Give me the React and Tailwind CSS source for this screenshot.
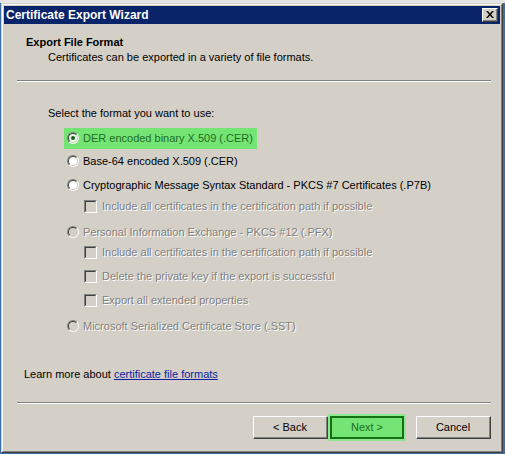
import React from "react";

const font = { fontFamily: '"Liberation Sans", Arial, sans-serif' };

function Radio({ checked, disabled, tint }) {
  return (
    <span className="w-[12px] h-[12px] rounded-full border border-t-[#808080] border-l-[#808080] border-b-white border-r-white flex shrink-0">
      <span
        className={`flex-1 rounded-full border border-t-[#404040] border-l-[#404040] border-b-[#d4d0c8] border-r-[#d4d0c8] flex items-center justify-center ${
          disabled ? "bg-[#d4d0c8]" : tint ? "bg-[#e6fbe6]" : "bg-white"
        }`}
      >
        {checked && <span className="w-[4px] h-[4px] rounded-full bg-[#1d5a1d]" />}
      </span>
    </span>
  );
}

function Check() {
  return (
    <span className="w-[13px] h-[13px] border border-t-[#808080] border-l-[#808080] border-b-white border-r-white flex shrink-0">
      <span className="flex-1 border border-t-[#404040] border-l-[#404040] border-b-[#d4d0c8] border-r-[#d4d0c8] bg-[#d4d0c8]" />
    </span>
  );
}

const dim = "text-[#808080] [text-shadow:1px_1px_0_#ffffff]";

function Option({ label, checked, disabled, highlight, mt }) {
  return (
    <div className={`h-[20px] flex items-center ${mt}`}>
      <div
        className={`flex items-center h-[21px] pl-[3px] pr-[4px] gap-[4px] ${
          highlight ? "bg-[#74e474] text-[#1f6e1f]" : disabled ? dim : "text-black"
        }`}
      >
        <Radio checked={checked} disabled={disabled} tint={highlight} />
        <span>{label}</span>
      </div>
    </div>
  );
}

function CheckRow({ label, mt }) {
  return (
    <div className={`h-[20px] flex items-center pl-[20px] gap-[5px] ${mt}`}>
      <Check />
      <span className={dim}>{label}</span>
    </div>
  );
}

function Button({ children, primary }) {
  if (primary) {
    return (
      <div className="p-[2px] bg-[#8fe88f]">
        <div className="w-[74px] h-[23px] border-2 border-[#157015] bg-[#74e474] flex items-center justify-center text-[#1f6e1f]">
          {children}
        </div>
      </div>
    );
  }
  return (
    <div className="w-[75px] h-[23px] border border-t-white border-l-white border-b-[#404040] border-r-[#404040] flex">
      <div className="flex-1 border-b border-r border-[#808080] bg-[#d4d0c8] flex items-center justify-center text-black">
        {children}
      </div>
    </div>
  );
}

function Separator() {
  return (
    <div className="ml-[13px] mr-[9px] h-[2px] flex flex-col shrink-0">
      <div className="h-px bg-[#808080]" />
      <div className="h-px bg-white" />
    </div>
  );
}

export default function App() {
  return (
    <div className="w-[505px] h-[454px] bg-[#3a6ea5] flex flex-col text-[11px] leading-none" style={font}>
      <div className="h-[3px] bg-[#e4e4e4] shrink-0" />
      <div className="flex-1 ml-[1px] mr-[2px] mb-[1px] bg-[#d4d0c8] border border-t-[#d4d0c8] border-l-[#d4d0c8] border-b-[#404040] border-r-[#404040] flex flex-col">
        <div className="flex-1 border border-t-white border-l-white border-b-[#808080] border-r-[#808080] p-px flex flex-col">
          <div className="h-[18px] bg-[#0a246a] flex items-center justify-between pl-[2px] pr-[2px] shrink-0">
            <span className="text-white font-bold text-[12px]">Certificate Export Wizard</span>
            <div className="w-[16px] h-[14px] border border-t-white border-l-white border-b-[#404040] border-r-[#404040] flex">
              <div className="flex-1 border-b border-r border-[#808080] bg-[#d4d0c8] flex items-center justify-center">
                <svg width="8" height="7" viewBox="0 0 8 7">
                  <path d="M0 0h2l2 2.5L6 0h2L5 3.5 8 7H6L4 4.5 2 7H0l3-3.5z" fill="#000" />
                </svg>
              </div>
            </div>
          </div>

          <div className="flex flex-col pt-[10px] pl-[22px]">
            <div className="font-bold h-[16px] flex items-center">Export File Format</div>
            <div className="pl-[22px] h-[14px] flex items-center">
              Certificates can be exported in a variety of file formats.
            </div>
          </div>
          <div className="h-[16px]" />
          <Separator />

          <div className="flex flex-col pl-[44px] pt-[23px]">
            <div className="h-[16px] flex items-center">Select the format you want to use:</div>
            <div className="pl-[16px] pt-[7px] flex flex-col">
              <Option label="DER encoded binary X.509 (.CER)" checked highlight />
              <Option label="Base-64 encoded X.509 (.CER)" mt="mt-[3px]" />
              <Option label="Cryptographic Message Syntax Standard - PKCS #7 Certificates (.P7B)" mt="mt-[4px]" />
              <CheckRow label="Include all certificates in the certification path if possible" mt="mt-[1px]" />
              <Option label="Personal Information Exchange - PKCS #12 (.PFX)" disabled mt="mt-[6px]" />
              <CheckRow label="Include all certificates in the certification path if possible" />
              <CheckRow label="Delete the private key if the export is successful" mt="mt-[4px]" />
              <CheckRow label="Export all extended properties" mt="mt-[4px]" />
              <Option label="Microsoft Serialized Certificate Store (.SST)" disabled mt="mt-[6px]" />
            </div>
          </div>

          <div className="pl-[20px] pt-[33px] h-[66px] flex items-start shrink-0">
            <span>
              Learn more about{" "}
              <span className="text-[#0a1ea0] underline">certificate file formats</span>
            </span>
          </div>
          <Separator />

          <div className="flex justify-end pr-[9px] pt-[10px]">
            <div className="flex items-center">
              <Button>&lt; Back</Button>
              <Button primary>Next &gt;</Button>
              <div className="w-[10px]" />
              <Button>Cancel</Button>
            </div>
          </div>
        </div>
      </div>
    </div>
  );
}
